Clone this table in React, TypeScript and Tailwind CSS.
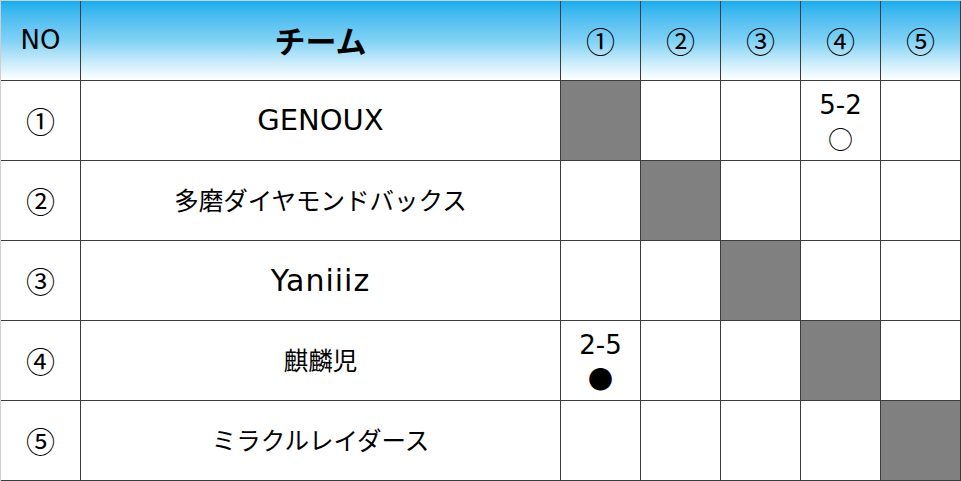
const teams = ["GENOUX", "多磨ダイヤモンドバックス", "Yaniiiz", "麒麟児", "ミラクルレイダース"];
const nums = ["①", "②", "③", "④", "⑤"];

// results[row-col] -> [score, mark]
const results: Record<string, [string, string]> = {
  "0-3": ["5-2", "○"],
  "3-0": ["2-5", "●"],
};

const latin = '"DejaVu Sans", "Noto Sans CJK JP", sans-serif';
const cell = "border-r border-b border-[#3c3c3c] flex items-center justify-center";
const head = `${cell} bg-gradient-to-b from-[#0eaeee] via-[#7fd2f4] to-white`;

export default function App() {
  return (
    <div
      className="grid grid-cols-[80px_480px_80px_80px_80px_80px_80px] grid-rows-[80px_80px_80px_80px_80px_80px] w-[961px] h-[481px] border-t border-l border-[#cfcfcf] bg-white text-black"
      style={{ fontFamily: '"Noto Sans CJK JP", sans-serif' }}
    >
      <div className={`${head} text-[26px]`} style={{ fontFamily: latin }}>
        NO
      </div>
      <div className={`${head} text-[31px] font-bold`}>チーム</div>
      {nums.map((n) => (
        <div key={n} className={`${head} text-[29px]`}>
          {n}
        </div>
      ))}
      {teams.map((t, r) => (
        <div key={t} className="contents">
          <div className={`${cell} text-[29px]`}>{nums[r]}</div>
          {r === 0 || r === 2 ? (
            <div
              className={`${cell} ${r === 0 ? "text-[29px]" : "text-[30px] tracking-[1px]"}`}
              style={{ fontFamily: latin }}
            >
              {t}
            </div>
          ) : (
            <div className={`${cell} text-[24.5px]`}>{t}</div>
          )}
          {nums.map((_, c) => {
            const res = results[`${r}-${c}`];
            if (r === c) return <div key={c} className={`${cell} bg-[#808080]`} />;
            return (
              <div key={c} className={`${cell} flex-col gap-[8px]`}>
                {res && (
                  <>
                    <div className="text-[26px] leading-[26px]" style={{ fontFamily: latin }}>
                      {res[0]}
                    </div>
                    <div className="text-[25px] leading-[24px]">{res[1]}</div>
                  </>
                )}
              </div>
            );
          })}
        </div>
      ))}
    </div>
  );
}
